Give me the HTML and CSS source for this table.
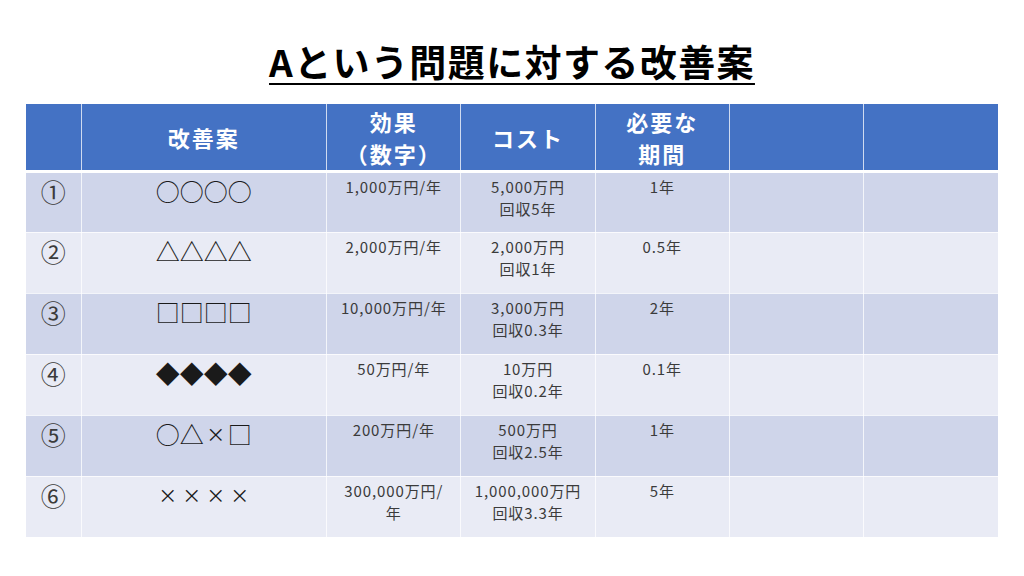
FILE: index.html
```html
<!DOCTYPE html>
<html lang="ja">
<head>
<meta charset="utf-8">
<title>Aという問題に対する改善案</title>
<link rel="stylesheet" href="styles.css">
</head>
<body>
<div class="slide">
  <h1 class="title">Aという問題に対する改善案</h1>
  <table class="grid">
    <colgroup>
      <col class="c-no"><col class="c-plan"><col class="c-mid"><col class="c-mid"><col class="c-mid"><col class="c-mid"><col class="c-mid">
    </colgroup>
    <thead>
      <tr>
        <th></th>
        <th>改善案</th>
        <th>効果<br>（数字）</th>
        <th>コスト</th>
        <th>必要な<br>期間</th>
        <th></th>
        <th></th>
      </tr>
    </thead>
    <tbody>
      <tr class="odd">
        <td class="no">①</td>
        <td class="shape">○○○○</td>
        <td>1,000万円/年</td>
        <td>5,000万円<br>回収5年</td>
        <td>1年</td>
        <td></td><td></td>
      </tr>
      <tr class="even">
        <td class="no">②</td>
        <td class="shape">△△△△</td>
        <td>2,000万円/年</td>
        <td>2,000万円<br>回収1年</td>
        <td>0.5年</td>
        <td></td><td></td>
      </tr>
      <tr class="odd">
        <td class="no">③</td>
        <td class="shape">□□□□</td>
        <td>10,000万円/年</td>
        <td>3,000万円<br>回収0.3年</td>
        <td>2年</td>
        <td></td><td></td>
      </tr>
      <tr class="even">
        <td class="no">④</td>
        <td class="shape">◆◆◆◆</td>
        <td>50万円/年</td>
        <td>10万円<br>回収0.2年</td>
        <td>0.1年</td>
        <td></td><td></td>
      </tr>
      <tr class="odd">
        <td class="no">⑤</td>
        <td class="shape">○△<span class="x">×</span>□</td>
        <td>200万円/年</td>
        <td>500万円<br>回収2.5年</td>
        <td>1年</td>
        <td></td><td></td>
      </tr>
      <tr class="even">
        <td class="no">⑥</td>
        <td class="shape"><span class="x">×</span><span class="x">×</span><span class="x">×</span><span class="x">×</span></td>
        <td>300,000万円/<br>年</td>
        <td>1,000,000万円<br>回収3.3年</td>
        <td>5年</td>
        <td></td><td></td>
      </tr>
    </tbody>
  </table>
</div>
</body>
</html>
```

FILE: styles.css
```css
html, body {
  margin: 0;
  padding: 0;
  background: #ffffff;
}

body {
  width: 1024px;
  height: 576px;
  overflow: hidden;
  font-family: "Noto Sans CJK JP", "Noto Sans", sans-serif;
  color: #3b3b3b;
}

.slide {
  display: flex;
  flex-direction: column;
  align-items: center;
  padding-top: 35px;
}

.title {
  margin: 0 0 17px 0;
  font-size: 37px;
  line-height: 52px;
  font-weight: 700;
  color: #000000;
  letter-spacing: 1.4px;
  text-decoration: underline;
  text-decoration-thickness: 2px;
  text-underline-offset: 6px;
}

.grid {
  width: 972px;
  table-layout: fixed;
  border-collapse: collapse;
}

.c-no { width: 55px; }
.c-plan { width: 245px; }
.c-mid { width: 134px; }

.grid th,
.grid td {
  border: 1px solid rgba(255, 255, 255, 0.75);
  padding: 0;
  text-align: center;
}

.grid tr > :first-child { border-left: none; }
.grid tr > :last-child { border-right: none; }
.grid thead th { border-top: none; }
.grid tbody tr:last-child td { border-bottom: none; }

.grid thead tr {
  background: #4472c4;
  height: 67px;
}

.grid th {
  color: #ffffff;
  font-size: 22px;
  line-height: 32px;
  font-weight: 700;
  vertical-align: middle;
  border-bottom: 3px solid #ffffff;
  letter-spacing: 2px;
}

.grid tbody tr {
  height: 61px;
}

.grid .odd { background: #cfd5ea; }
.grid .even { background: #e9ebf5; }

.grid td {
  vertical-align: top;
  font-size: 15px;
  line-height: 22px;
  letter-spacing: 0.9px;
  padding-top: 3px;
  color: #3b3b3b;
}

.grid td.no {
  font-size: 25px;
  line-height: 37px;
  padding-top: 0;
  letter-spacing: 0;
}

.grid td.shape {
  font-size: 24px;
  line-height: 35px;
  padding-top: 0;
  letter-spacing: 0;
  color: #1a1a1a;
}

.x {
  display: inline-block;
  width: 24px;
  font-size: 19px;
  text-align: center;
  vertical-align: top;
}
```
